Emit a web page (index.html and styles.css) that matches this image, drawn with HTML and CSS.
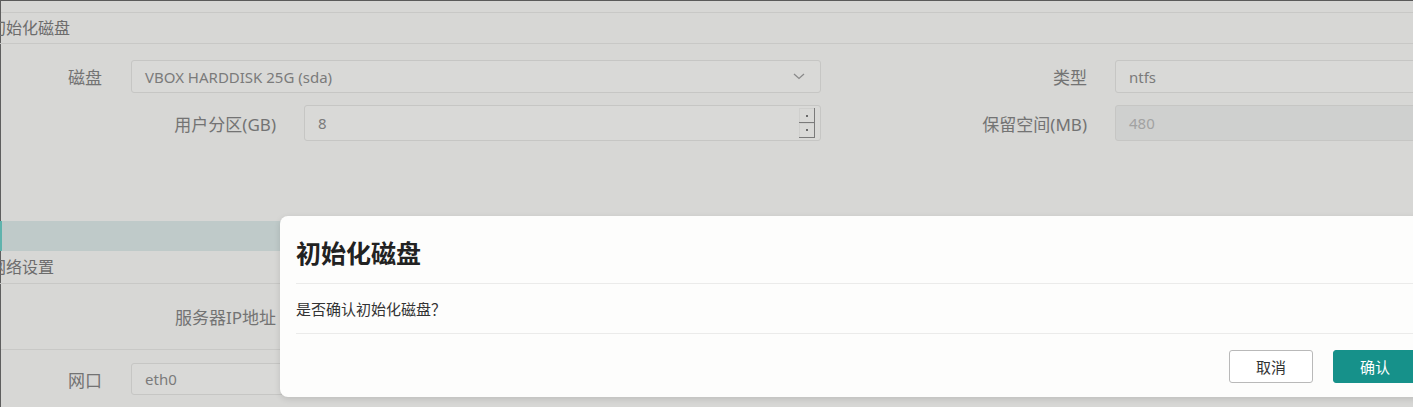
FILE: index.html
```html
<!DOCTYPE html>
<html lang="zh-CN">
<head>
<meta charset="utf-8">
<title>初始化磁盘</title>
<link rel="stylesheet" href="styles.css">
</head>
<body>
<div class="app">
  <div class="topbar"></div>
  <section class="panel">
    <header class="panel-head">初始化磁盘</header>
    <div class="panel-body">
      <div class="row row-disk">
        <div class="field">
          <label class="lbl lbl-s">磁盘</label>
          <div class="control select w-wide">
            <span>VBOX HARDDISK 25G (sda)</span>
            <svg class="chev" width="12" height="7" viewBox="0 0 12 7"><path d="M1 1 L6 5.5 L11 1" fill="none" stroke="#8a8a8a" stroke-width="1.3"/></svg>
          </div>
        </div>
        <div class="field">
          <label class="lbl lbl-r">类型</label>
          <div class="control w-right">ntfs</div>
        </div>
      </div>
      <div class="row row-part">
        <div class="field">
          <label class="lbl lbl-l">用户分区(GB)</label>
          <div class="control num w-mid">
            <span>8</span>
            <svg class="spin" width="16" height="30" viewBox="0 0 16 30">
              <rect x="0.5" y="0.5" width="15" height="14" fill="#d9d9d7" stroke="#cfcfcd"/>
              <rect x="0.5" y="15.5" width="15" height="14" fill="#d9d9d7" stroke="#cfcfcd"/>
              <path d="M15.5 0 V30 M0 14.5 H16 M0 29.5 H16" stroke="#7a7a7a" stroke-width="1"/>
              <rect x="7" y="7" width="2" height="2" fill="#6a6a6a"/>
              <rect x="7" y="21" width="2" height="2" fill="#6a6a6a"/>
            </svg>
          </div>
        </div>
        <div class="field">
          <label class="lbl lbl-r">保留空间(MB)</label>
          <div class="control disabled w-right">480</div>
        </div>
      </div>
    </div>
  </section>
  <div class="tabbar"></div>
  <section class="panel">
    <header class="panel-head panel-head-2">网络设置</header>
    <div class="row row-ip">
      <label class="lbl lbl-l">服务器IP地址</label>
    </div>
    <div class="divider"></div>
    <div class="row row-nic">
      <div class="field">
        <label class="lbl lbl-s">网口</label>
        <div class="control w-wide nic">eth0</div>
      </div>
    </div>
  </section>
</div>

<div class="modal">
  <div class="modal-head"><h2>初始化磁盘</h2></div>
  <div class="modal-body">是否确认初始化磁盘？</div>
  <div class="modal-foot">
    <button class="btn btn-cancel">取消</button>
    <button class="btn btn-ok">确认</button>
  </div>
</div>
</body>
</html>
```
FILE: styles.css
```css
* { box-sizing: border-box; }
html, body { margin: 0; padding: 0; }
body {
  width: 1413px;
  height: 407px;
  overflow: hidden;
  background: #d7d7d5;
  font-family: "Noto Sans", "Noto Sans CJK SC", sans-serif;
  color: #707070;
  position: relative;
}
.app {
  border-left: 1px solid #5e5e5e;
  height: 407px;
}
.topbar {
  height: 13px;
  border-top: 1px solid #5a5a5a;
  border-bottom: 1px solid #c8c8c6;
}
.panel-head {
  height: 31px;
  line-height: 30px;
  font-size: 16px;
  color: #6c6c6c;
  margin-left: -11px;
  padding-left: 0;
  border-bottom: 1px solid #c8c8c6;
}
.panel-head-2 {
  height: 33px;
  line-height: 32px;
}
.panel-body { padding-top: 16px; }
.row { display: flex; align-items: center; }
.field { display: flex; align-items: center; }
.lbl {
  font-size: 17px;
  color: #737373;
  text-align: right;
  flex: none;
}
.lbl-s { width: 101px; margin-right: 29px; }
.lbl-l { width: 275px; margin-right: 28px; }
.lbl-r { width: 266px; margin-right: 28px; }
.control {
  flex: none;
  display: flex;
  align-items: center;
  padding-left: 13px;
  font-size: 15px;
  color: #7b7b7b;
  background: #d9d9d7;
  border: 1px solid #c6c6c4;
  border-radius: 3px;
}
.w-wide { width: 690px; }
.w-mid { width: 517px; }
.w-right { width: 400px; }
.row-disk { height: 33px; }
.row-disk .control { height: 33px; }
.row-part { height: 36px; margin-top: 12px; }
.row-part .control { height: 36px; }
.select { justify-content: space-between; padding-right: 15px; }
.num { justify-content: space-between; padding-right: 5px; }
.chev { display: block; }
.spin { display: block; }
.disabled { background: #cfd0cf; color: #a2a2a2; }
.tabbar {
  margin-top: 80px;
  height: 30px;
  background: #bfcac9;
  border-left: 2px solid #5fb3ad;
  margin-left: -1px;
}
.row-ip { height: 36px; margin-top: 14px; }
.divider {
  margin-top: 15px;
  height: 1px;
  background: #c8c8c6;
}
.row-nic { margin-top: 13px; }
.row-nic .control { height: 32px; }

.modal {
  position: absolute;
  left: 280px;
  top: 216px;
  width: 1153px;
  height: 181px;
  background: #fdfdfc;
  border-radius: 8px;
  box-shadow: 0 2px 6px rgba(0,0,0,0.12);
  display: flex;
  flex-direction: column;
}
.modal-head {
  height: 68px;
  margin: 0 16px;
  border-bottom: 1px solid #ebebea;
  display: flex;
  align-items: center;
}
.modal-head h2 {
  margin: 0;
  font-family: "Noto Sans CJK SC", sans-serif;
  font-size: 25px;
  font-weight: 700;
  color: #222;
  padding-top: 4px;
}
.modal-body {
  height: 50px;
  margin: 0 16px;
  border-bottom: 1px solid #ebebea;
  display: flex;
  align-items: center;
  font-family: "Noto Sans CJK SC", sans-serif;
  font-size: 15px;
  color: #333;
}
.modal-foot {
  display: flex;
  justify-content: flex-end;
  gap: 20px;
  padding: 16px 16px 0 0;
}
.btn {
  width: 84px;
  height: 33px;
  font-family: "Noto Sans CJK SC", sans-serif;
  font-size: 15px;
  border-radius: 3px;
  padding: 0;
  cursor: pointer;
}
.btn-cancel {
  background: #fff;
  border: 1px solid #b9b9b9;
  color: #333;
}
.btn-ok {
  background: #16918a;
  border: 1px solid #16918a;
  color: #fff;
}
```
